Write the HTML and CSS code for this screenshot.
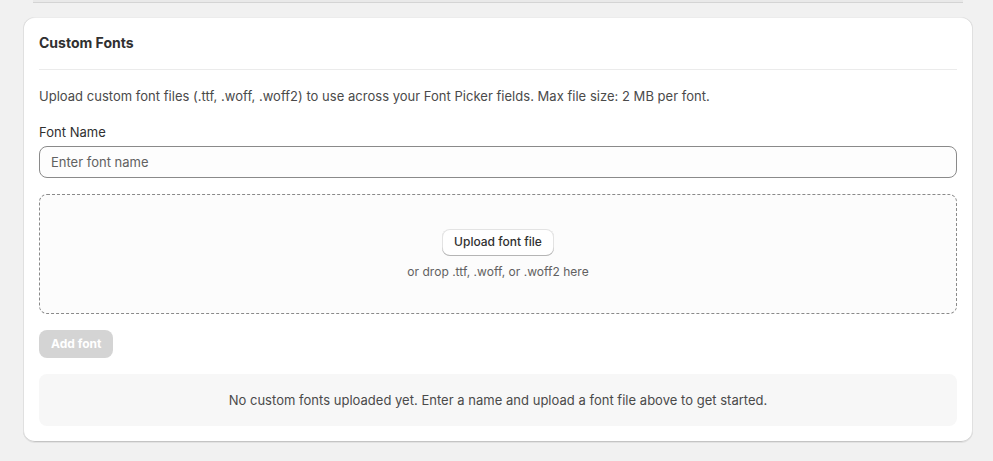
FILE: index.html
```html
<!DOCTYPE html>
<html lang="en">
<head>
<meta charset="utf-8">
<title>Custom Fonts</title>
<link rel="stylesheet" href="styles.css">
</head>
<body>
<div class="prev-edge"></div>
<section class="card">
  <h2 class="card-title">Custom Fonts</h2>
  <hr class="divider">
  <p class="desc">Upload custom font files (.ttf, .woff, .woff2) to use across your Font Picker fields. Max file size: 2 MB per font.</p>
  <label class="field-label" for="fname">Font Name</label>
  <input class="text-input" id="fname" type="text" placeholder="Enter font name">
  <div class="dropzone">
    <button class="btn-secondary" type="button">Upload font file</button>
    <span class="drop-hint">or drop .ttf, .woff, or .woff2 here</span>
  </div>
  <div class="actions">
    <button class="btn-disabled" type="button" disabled>Add font</button>
  </div>
  <div class="empty">No custom fonts uploaded yet. Enter a name and upload a font file above to get started.</div>
</section>
</body>
</html>
```

FILE: styles.css
```css
* { box-sizing: border-box; }
html, body { margin: 0; padding: 0; }
body {
  background: #f1f1f1;
  font-family: Inter, "Noto Sans", "Liberation Sans", sans-serif;
  color: #303030;
  font-size: 13px;
  line-height: 20px;
  letter-spacing: 0.02px;
  height: 461px;
  overflow: hidden;
}
.prev-edge {
  height: 3px;
  margin: 0 30px 0 33px;
  background: #e9e9e9;
  border-bottom: 1px solid #d4d4d4;
}
.card {
  margin: 14px 20px 0 23px;
  background: #fff;
  border-radius: 12px;
  padding: 16px;
  display: flex;
  flex-direction: column;
  box-shadow: 0 1px 0 0 rgba(26,26,26,.07),
    inset 0 1px 0 0 rgba(208,208,208,.4),
    inset 1px 0 0 0 #e0e0e0,
    inset -1px 0 0 0 #e0e0e0,
    inset 0 -1px 0 0 #c4c4c4;
}
.card-title {
  margin: 0;
  font-size: 14px;
  font-weight: 650;
  line-height: 20px;
  color: #303030;
  letter-spacing: 0;
}
.divider {
  margin: 16px 0 0;
  border: 0;
  border-top: 1px solid #ebebeb;
  height: 0;
}
.desc {
  margin: 16px 0 0;
  color: #4a4a4a;
}
.field-label {
  margin-top: 16px;
  display: block;
  color: #303030;
}
.text-input {
  margin-top: 4px;
  height: 32px;
  width: 100%;
  border: 1px solid #8a8a8a;
  border-radius: 8px;
  background: #fdfdfd;
  padding: 0 11px;
  font: inherit;
  color: #303030;
}
.text-input::placeholder { color: #616161; }
.dropzone {
  margin-top: 16px;
  height: 120px;
  border: 1px dashed #8a8a8a;
  border-radius: 8px;
  background: #fcfcfc;
  display: flex;
  flex-direction: column;
  align-items: center;
  justify-content: center;
  gap: 8px;
  padding-top: 1px;
}
.btn-secondary {
  font: inherit;
  font-size: 12px;
  font-weight: 550;
  line-height: 16px;
  color: #303030;
  background: #fff;
  border: 0;
  border-radius: 8px;
  padding: 5px 12px 6px;
  box-shadow: inset 0 -1px 0 0 #b5b5b5, inset 0 0 0 1px #e3e3e3;
}
.drop-hint {
  font-size: 12px;
  line-height: 16px;
  color: #616161;
}
.actions { margin-top: 16px; display: flex; }
.btn-disabled {
  font: inherit;
  font-size: 12px;
  font-weight: 650;
  line-height: 16px;
  color: #fff;
  background: #d4d4d4;
  border: 0;
  border-radius: 8px;
  padding: 6px 12px;
  height: 28px;
}
.empty {
  margin-top: 16px;
  background: #f7f7f7;
  border-radius: 8px;
  padding: 16px;
  text-align: center;
  color: #4a4a4a;
}
```
